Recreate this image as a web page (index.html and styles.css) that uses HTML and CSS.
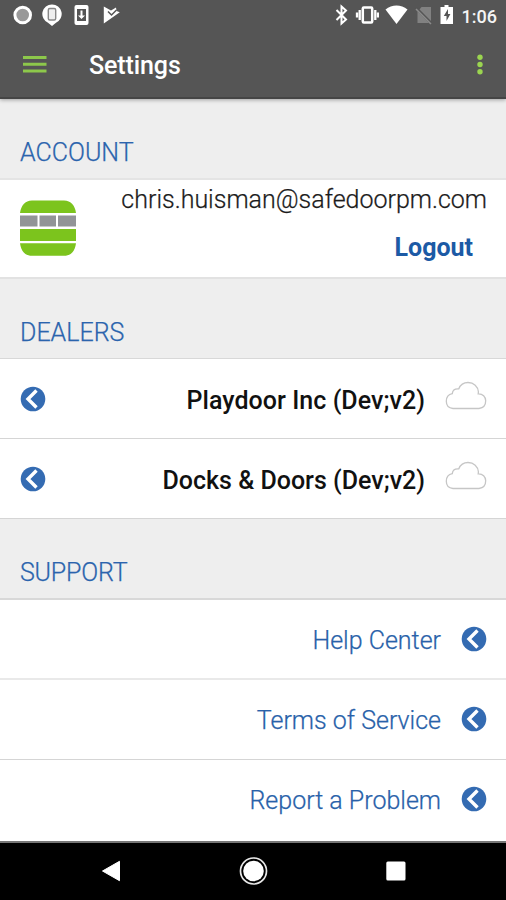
FILE: index.html
```html
<!DOCTYPE html>
<html lang="en">
<head>
<meta charset="utf-8">
<title>Settings</title>
<link rel="stylesheet" href="styles.css">
</head>
<body>
<svg class="sprite" width="0" height="0" aria-hidden="true">
  <symbol id="chevron" viewBox="0 0 26 26">
    <circle cx="13" cy="13" r="12.3" fill="#346bb2"/>
    <path d="M16.500 4.500 8 13l8.500 8.500" fill="none" stroke="#fff" stroke-width="3.400"/>
  </symbol>
  <symbol id="cloud" viewBox="0 0 42 30">
    <path d="M8 27.500C3.800 27 1.300 24 1.300 20.200c0-4 2.100-6.800 6-7.600.3-3.200 2.700-5 6.400-4.700C15.500 3.500 19 1.500 23 1.500c5.800 0 10 4 10.400 9.300-.1.600-.1 1.300-.2 2 4.500-.2 7.500 3 7.500 7 0 4.200-2.700 7.200-6.700 7.700z" fill="none" stroke="#c6c6c6" stroke-width="1.300"/>
  </symbol>
</svg>
<header class="top">
  <div class="status">
    <div class="status-left">
      <svg width="20" height="22" viewBox="0 0 20 22"><circle cx="9.700" cy="11" r="7.800" fill="#999" stroke="#fff" stroke-width="3"/></svg>
      <svg width="20" height="22" viewBox="0 0 20 22"><path d="M10 .5a9.500 9.500 0 0 1 4 18.200L10 22l-4-3.300A9.500 9.500 0 0 1 10 .5z" fill="#fff"/><rect x="6.300" y="4.500" width="7.400" height="11.500" rx="1.500" fill="#eee" stroke="#888" stroke-width="1.400"/></svg>
      <svg width="15" height="22" viewBox="0 0 15 22"><rect x=".5" y="1" width="14" height="20" rx="2" fill="#fff"/><path d="M3 5h9v12H3z" fill="#555"/><path d="M6.500 6.500h2v5H11L7.500 15 4 11.500h2.500z" fill="#fff"/></svg>
      <svg width="17" height="22" viewBox="0 0 17 22"><path d="M.8 2.500 8 6.500l5-3 .5 3.500 3.300 1.300L.8 19.500z" fill="#fff"/><path d="m5 7.500 3.500 3.500 5-5" fill="none" stroke="#555" stroke-width="1.500"/></svg>
    </div>
    <div class="status-right">
      <svg class="bluetooth" width="14" height="22" viewBox="0 0 14 22"><path d="m2.500 6 9.500 9.500-4.500 4v-17l4.500 4-9.500 9.500" fill="none" stroke="#fff" stroke-width="2"/></svg>
      <svg class="vibrate" width="24" height="22" viewBox="0 0 24 22"><rect x="7.800" y="3.500" width="9.400" height="15" rx="1" fill="#555" stroke="#fff" stroke-width="2.500"/><path d="M4.700 6v10M20.300 6v10M2 8.500v5M23 8.500v5" stroke="#fff" stroke-width="2.300"/></svg>
      <svg class="wifi" width="23" height="22" viewBox="0 0 23 22"><path d="M.5 5.500c6.500-5.300 15.500-5.300 22 0l-11 14.500z" fill="#fff"/></svg>
      <svg class="nosim" width="17" height="22" viewBox="0 0 17 22"><path d="M6.500 3H16v16H2.500V8z" fill="#818181"/><path d="m1 4 16 16" stroke="#555" stroke-width="3"/><path d="m1 5 15 15" stroke="#8b8b8b" stroke-width="1.500"/></svg>
      <svg class="battery" width="13" height="22" viewBox="0 0 13 22"><path d="M4.500 1h4v2H13v17H.5V3h4z" fill="#fff"/><path d="M8 5 3.800 12h2.700v5L10.400 10H8z" fill="#555"/></svg>
      <span class="clock">1:06</span>
    </div>
  </div>
  <div class="appbar">
    <svg width="24" height="18" viewBox="0 0 24 18"><path d="M0 1.500h23.500M0 8.300h23.500M0 15h23.500" stroke="#8dc84b" stroke-width="2.900"/></svg>
    <h1>Settings</h1>
    <svg width="8" height="22" viewBox="0 0 8 22"><g fill="#9bd550"><circle cx="4" cy="3.300" r="2.700"/><circle cx="4" cy="10.500" r="2.700"/><circle cx="4" cy="17.800" r="2.700"/></g></svg>
  </div>
</header>
<main>
  <h2>ACCOUNT</h2>
  <section class="account">
    <svg width="56" height="56" viewBox="0 0 56 56"><path d="M12 .5h32c7 0 11 5 12 12.500H0C1 5.500 5 .5 12 .5zM0 29h56v12H0zM0 43.300h56c-1 8-5 12.500-12 12.500H12C5 55.800 1 51.300 0 43.300z" fill="#7cc41d"/><path d="M0 15.500h17.500v11H0zM19.500 15.500h16.500v11H19.500zM38 15.500h18v11H38z" fill="#929497"/></svg>
    <div class="account-info">
      <span class="email">chris.huisman@safedoorpm.com</span>
      <span class="logout">Logout</span>
    </div>
  </section>
  <h2>DEALERS</h2>
  <section>
    <div class="row"><svg class="chevron"><use href="#chevron"/></svg><span class="name playdoor">Playdoor Inc (Dev;v2)</span><svg class="cloud"><use href="#cloud"/></svg></div>
    <div class="row"><svg class="chevron"><use href="#chevron"/></svg><span class="name">Docks &amp; Doors (Dev;v2)</span><svg class="cloud"><use href="#cloud"/></svg></div>
  </section>
  <h2 class="support-title">SUPPORT</h2>
  <section>
    <div class="row support soft"><span>Help Center</span><svg class="chevron"><use href="#chevron"/></svg></div>
    <div class="row support"><span>Terms of Service</span><svg class="chevron"><use href="#chevron"/></svg></div>
    <div class="row support last"><span>Report a Problem</span><svg class="chevron"><use href="#chevron"/></svg></div>
  </section>
</main>
<nav>
  <svg width="20" height="22" viewBox="0 0 20 22"><path d="M1.500 11 18.500 1.300v19.400z" fill="#fff" stroke="#fff" stroke-linejoin="round"/></svg>
  <svg width="30" height="30" viewBox="0 0 30 30"><circle cx="14.500" cy="15" r="13" fill="none" stroke="#e8e8e8" stroke-width="1.700"/><circle cx="14.500" cy="15" r="10.300" fill="#fff"/></svg>
  <svg width="20" height="20" viewBox="0 0 20 20"><rect x=".3" y=".5" width="19.200" height="19" rx="1.500" fill="#fff"/></svg>
</nav>
</body>
</html>
```
FILE: styles.css
```css
* { box-sizing: border-box; }
body {
  margin: 0;
  width: 506px;
  height: 900px;
  overflow: hidden;
  display: flex;
  flex-direction: column;
  background: #eee;
  font-family: Roboto, "Liberation Sans", sans-serif;
  font-size: 25px;
  white-space: nowrap;
}
svg { display: block; flex: none; }
.sprite { position: absolute; }
.top {
  height: 99px;
  background: #555;
  border-bottom: 2px solid #454545;
  box-shadow: 0 1px 4px #0005;
}
.status {
  height: 30px;
  display: flex;
  justify-content: space-between;
  padding: 4px 9px 0 13px;
}
.status-left { display: flex; gap: 9px; }
.status-left svg:nth-child(3) { margin-left: 3px; }
.status-left svg:nth-child(4) { margin-left: 5px; }
.status-right { display: flex; }
.vibrate { margin-left: 7px; }
.wifi { margin-left: 6px; }
.nosim { margin-left: 7px; }
.battery { margin-left: 8px; }
.clock {
  margin-left: 9px;
  color: #f4f4f4;
  font-size: 18px;
  font-weight: 500;
  line-height: 25px;
}
.appbar {
  height: 68px;
  display: flex;
  align-items: center;
  padding: 1px 22px 0 23px;
}
h1 {
  margin: 3px auto 0 42px;
  color: #fff;
  font-size: 25px;
  font-weight: 500;
  line-height: 30px;
  letter-spacing: -.1px;
}
h2 {
  margin: 0;
  height: 80px;
  padding: 39px 20px 0;
  border-bottom: 1px solid #d8d8d8;
  color: #2b64ad;
  font-size: 25px;
  font-weight: 300;
  line-height: 30px;
  -webkit-text-stroke: .25px;
}
.support-title { height: 81px; letter-spacing: -.2px; border-bottom-width: 2px; }
main > h2:first-child { height: 81px; border-bottom: 2px solid #e4e4e4; }
.account {
  height: 99px;
  display: flex;
  justify-content: space-between;
  padding: 20px 19px 0 20px;
  background: #fff;
  border-bottom: 2px solid #e2e2e2;
}
.account-info {
  display: flex;
  flex-direction: column;
  align-items: flex-end;
  margin-top: -15px;
  line-height: 30px;
}
.email { color: #1b1b1b; font-weight: 300; -webkit-text-stroke: .25px; }
.logout { margin: 18px 14px 0 0; color: #1c5aa5; font-weight: 700; }
.row {
  height: 80px;
  display: flex;
  align-items: center;
  justify-content: flex-end;
  padding: 0 19px 0 20px;
  background: #fff;
  border-bottom: 1px solid #d5d5d5;
  line-height: 30px;
}
.soft { border-bottom: 2px solid #e9e9e9; }
.support:nth-child(2) { padding-bottom: 1px; }
.last { height: 81px; padding-bottom: 3px; border-bottom: 0; }
.chevron { width: 26px; height: 26px; }
.cloud { width: 42px; height: 30px; margin: -6px 0 0 20px; }
.name { margin: 5px 0 0 auto; color: #111; font-weight: 500; }
.playdoor { letter-spacing: .05px; }
.support { color: #2861a9; font-weight: 300; -webkit-text-stroke: .25px; }
.support span { margin: 3px 20px 0 0; }
nav {
  flex: 1;
  display: flex;
  align-items: center;
  justify-content: space-between;
  padding: 0 100px 2px 101px;
  background: #000;
  border-top: 2px solid #777;
}
```
